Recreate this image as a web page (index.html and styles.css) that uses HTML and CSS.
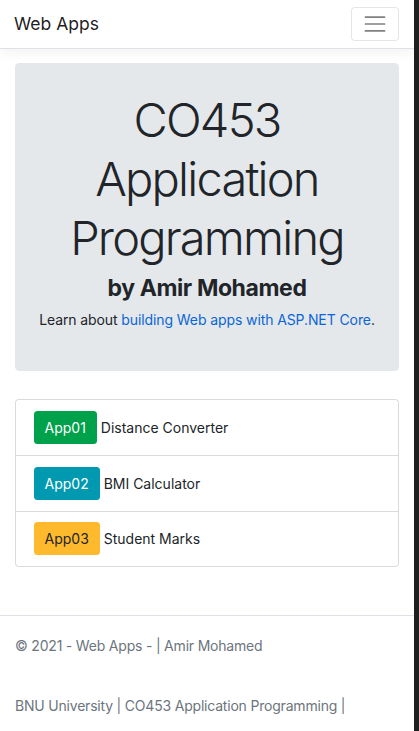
FILE: index.html
```html
<!DOCTYPE html>
<html lang="en">
<head>
<meta charset="utf-8">
<title>Web Apps</title>
<link rel="stylesheet" href="styles.css">
</head>
<body>
<header class="navbar">
  <a class="brand" href="#">Web Apps</a>
  <button class="toggler" type="button" aria-label="Toggle navigation">
    <svg width="26" height="26" viewBox="0 0 30 30"><path d="M4 7h22M4 15h22M4 23h22" stroke="rgba(0,0,0,0.5)" stroke-width="2" stroke-linecap="round" fill="none"/></svg>
  </button>
</header>
<main class="container">
  <section class="jumbotron">
    <h1 class="display">CO453 Application Programming</h1>
    <h3 class="author">by Amir Mohamed</h3>
    <p class="lead-line">Learn about <a href="#">building Web apps with ASP.NET Core</a>.</p>
  </section>
  <ul class="list-group">
    <li class="item"><a class="btn btn-success" href="#">App01</a> Distance Converter</li>
    <li class="item"><a class="btn btn-info" href="#">App02</a> BMI Calculator</li>
    <li class="item"><a class="btn btn-warning" href="#">App03</a> Student Marks</li>
  </ul>
</main>
<footer class="footer">
  <div class="container">
    <div class="foot-line">© 2021 - Web Apps - | Amir Mohamed</div>
    <div class="foot-line">BNU University | CO453 Application Programming |</div>
  </div>
</footer>
</body>
</html>
```
FILE: styles.css
```css
html {
  background: #1f1f1f;
  overflow: hidden;
  font-size: 14px;
}
body {
  margin: 0 5px 0 0;
  min-height: 100vh;
  background: #fff;
  font-family: Inter, "Noto Sans", "Liberation Sans", sans-serif;
  font-size: 14px;
  line-height: 1.5;
  color: #212529;
}
.navbar {
  display: flex;
  align-items: center;
  justify-content: space-between;
  padding: 7px 15px 7px 14px;
  border-bottom: 1px solid #dee2e6;
  box-shadow: 0 3.5px 10.5px rgba(0,0,0,0.05);
  margin-bottom: 14px;
}
.brand {
  font-size: 17.5px;
  line-height: 26px;
  padding: 4px 0;
  color: rgba(0,0,0,0.9);
  text-decoration: none;
}
.toggler {
  width: 48px;
  height: 34px;
  padding: 0;
  display: flex;
  align-items: center;
  justify-content: center;
  background: transparent;
  border: 1px solid rgba(0,0,0,0.1);
  border-radius: 3.5px;
}
.toggler svg { display: block; }
.container {
  padding: 0 15px;
}
.jumbotron {
  background: #e5e8eb;
  border-radius: 4.2px;
  padding: 28px 14px 27px;
  margin-bottom: 28px;
  text-align: center;
}
.display {
  margin: 0 0 7px;
  font-size: 47px;
  font-weight: 300;
  line-height: 58.8px;
  letter-spacing: -1.8px;
}
.author {
  margin: 0 0 7px;
  font-size: 23px;
  font-weight: 700;
  line-height: 28px;
  letter-spacing: -0.4px;
}
.lead-line {
  margin: 0 0 14px;
  letter-spacing: -0.1px;
}
.lead-line a {
  color: #0a66d6;
  text-decoration: none;
}
.list-group {
  list-style: none;
  margin: 0;
  padding: 0;
  border: 1px solid rgba(0,0,0,0.14);
  border-radius: 3.5px;
}
.item {
  padding: 10.8px 17.5px;
  line-height: 21px;
}
.item + .item {
  border-top: 1px solid rgba(0,0,0,0.14);
}
.btn {
  display: inline-block;
  padding: 6px 11px;
  border-radius: 3.5px;
  color: #fff;
  text-decoration: none;
  line-height: 21px;
}
.btn-success { background: #00a14b; }
.btn-info { background: #0099b0; }
.btn-warning { background: #ffb92d; color: #212529; }
.footer {
  margin-top: 48px;
  border-top: 1px solid #dee2e6;
  color: #6c757d;
}
.foot-line {
  line-height: 60px;
  white-space: nowrap;
  letter-spacing: -0.2px;
}
```
